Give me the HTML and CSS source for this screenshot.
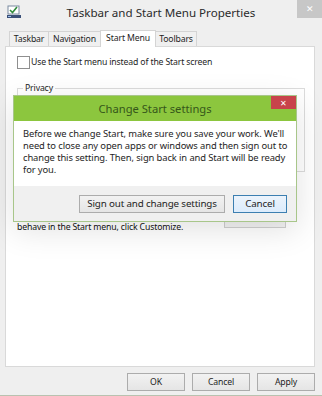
FILE: index.html
```html
<!DOCTYPE html>
<html lang="en">
<head>
  <meta charset="UTF-8" />
  <title>Taskbar and Start Menu Properties</title>
  <link rel="stylesheet" href="styles.css">
</head>
<body>

<div class="window">
  <div class="titlebar">
    <div class="app-icon">
      <svg width="14" height="13" viewBox="0 0 14 13">
        <rect x="1" y="1" width="11" height="8" fill="#fff" stroke="#7a8aa0" stroke-width="1"/>
        <path d="M3 5 L5.5 7.5 L10 2" fill="none" stroke="#2f8a3a" stroke-width="1.6"/>
        <rect x="0" y="10" width="14" height="3" fill="#3a4f78"/>
        <rect x="1" y="11" width="3" height="1" fill="#9fc0ea"/>
      </svg>
    </div>
    <div class="title">Taskbar and Start Menu Properties</div>
    <div class="title-close">&#x2715;</div>
  </div>

  <div class="tabs">
    <div class="tab t1">Taskbar</div>
    <div class="tab t2">Navigation</div>
    <div class="tab t3 active">Start Menu</div>
    <div class="tab t4">Toolbars</div>
  </div>

  <div class="panel">
    <label class="check-row">
      <span class="checkbox"></span>
      Use the Start menu instead of the Start screen
    </label>

    <div class="group">
      <div class="group-label">Privacy</div>
    </div>

    <div class="customize-row">
      <p class="customize-text">To customize how links, icons, and menus look and<br>behave in the Start menu, click Customize.</p>
      <div class="btn disabled">Customize...</div>
    </div>
  </div>

  <div class="footer">
    <div class="btn">OK</div>
    <div class="btn">Cancel</div>
    <div class="btn">Apply</div>
  </div>

  <div class="dialog">
    <div class="dialog-head">
      <span class="dialog-title">Change Start settings</span>
      <div class="dialog-close">&#x2715;</div>
    </div>
    <div class="dialog-body">
      Before we change Start, make sure you save your work. We'll<br>
      need to close any open apps or windows and then sign out to<br>
      change this setting. Then, sign back in and Start will be ready<br>
      for you.
    </div>
    <div class="dialog-foot">
      <div class="btn wide">Sign out and change settings</div>
      <div class="btn default">Cancel</div>
    </div>
  </div>
</div>

</body>
</html>
```

FILE: styles.css
```css
body {
  margin: 0;
  font-family: 'Segoe UI', 'Noto Sans', sans-serif;
  font-size: 8.7px;
  letter-spacing: -0.15px;
  color: #1e1e1e;
  background: #f0f0f0;
}
.window {
  position: relative;
  width: 322px;
  height: 396px;
  box-sizing: border-box;
  background: #efefef;
  border-bottom: 1px solid #b9c2b0;
  display: flex;
  flex-direction: column;
}
.titlebar {
  height: 28px;
  display: grid;
  grid-template-columns: 1fr auto 1fr;
  align-items: start;
}
.app-icon {
  padding: 5px 0 0 7px;
}
.title {
  font-size: 11.6px;
  letter-spacing: 0;
  color: #2b2b2b;
  padding-top: 5px;
}
.title-close {
  justify-self: end;
  width: 25px;
  height: 18px;
  background: #c7c7c7;
  color: #fff;
  font-size: 9px;
  text-align: center;
  line-height: 18px;
}
.tabs {
  display: flex;
  align-items: flex-end;
  margin: 2px 0 0 9px;
  height: 16px;
}
.tab {
  height: 14px;
  line-height: 14px;
  text-align: center;
  border: 1px solid #d4d4d4;
  border-bottom: none;
  margin-right: -1px;
  background: #f0f0f0;
}
.t1 { width: 38px; }
.t2 { width: 51px; }
.t3 { width: 54px; }
.t4 { width: 40px; }
.tab.active {
  height: 16px;
  line-height: 15px;
  background: #fff;
  position: relative;
  z-index: 1;
  margin-bottom: -1px;
}
.panel {
  margin: 0 7px 0 5px;
  height: 321px;
  box-sizing: border-box;
  background: #fff;
  border: 1px solid #d9d9d9;
  padding: 8px 9px 0 11px;
}
.check-row {
  display: flex;
  align-items: center;
  gap: 1px;
  height: 14px;
}
.checkbox {
  width: 11px;
  height: 11px;
  border: 1px solid #8f8f8f;
  background: #fff;
}
.group {
  position: relative;
  margin-top: 19px;
  height: 82px;
  border: 1px solid #dcdcdc;
}
.group-label {
  position: absolute;
  top: -6px;
  left: 5px;
  padding: 0 2px;
  background: #fff;
  line-height: 10px;
}
.customize-row {
  display: flex;
  justify-content: space-between;
  align-items: flex-start;
  margin-top: 37px;
}
.customize-text {
  margin: 0;
  line-height: 12px;
  color: #111;
}
.btn {
  height: 17px;
  box-sizing: border-box;
  border: 1px solid #acacac;
  background: linear-gradient(#f2f2f2, #e5e5e5);
  text-align: center;
  line-height: 15px;
  width: 58px;
}
.btn.disabled {
  width: 62px;
  color: #a0a0a0;
  border-color: #d0d0d0;
  background: #f4f4f4;
  margin: 2px 19px 0 0;
}
.footer {
  display: flex;
  justify-content: flex-end;
  gap: 7px;
  padding: 6px 7px 0 0;
}
.footer .btn {
  height: 18px;
  line-height: 16px;
}
.dialog {
  position: absolute;
  left: 13px;
  top: 95px;
  width: 284px;
  height: 127px;
  box-sizing: border-box;
  border: 1px solid #a8c68a;
  background: #fff;
  box-shadow: 0 8px 30px rgba(0, 0, 0, 0.12);
  display: flex;
  flex-direction: column;
}
.dialog-head {
  position: relative;
  height: 25px;
  background: #8cc63e;
  display: flex;
  justify-content: center;
  align-items: center;
}
.dialog-title {
  font-size: 11.2px;
  letter-spacing: 0;
  color: #35561a;
}
.dialog-close {
  position: absolute;
  top: 0;
  right: 0;
  width: 25px;
  height: 13px;
  background: #c8434b;
  color: #fff;
  font-size: 8px;
  text-align: center;
  line-height: 13px;
}
.dialog-body {
  flex: 1;
  padding: 7px 4px 0 9px;
  font-size: 9.4px;
  letter-spacing: -0.1px;
  line-height: 12px;
  white-space: nowrap;
}
.dialog-foot {
  height: 35px;
  background: #f0f0f0;
  display: flex;
  justify-content: flex-end;
  align-items: center;
  gap: 8px;
  padding-right: 9px;
}
.dialog-foot .btn {
  height: 18px;
  line-height: 16px;
  font-size: 9.8px;
}
.btn.wide {
  width: 146px;
}
.btn.default {
  width: 54px;
  border-color: #3c7fb1;
  background: linear-gradient(#ecf4fc, #dcecfc);
}
```
